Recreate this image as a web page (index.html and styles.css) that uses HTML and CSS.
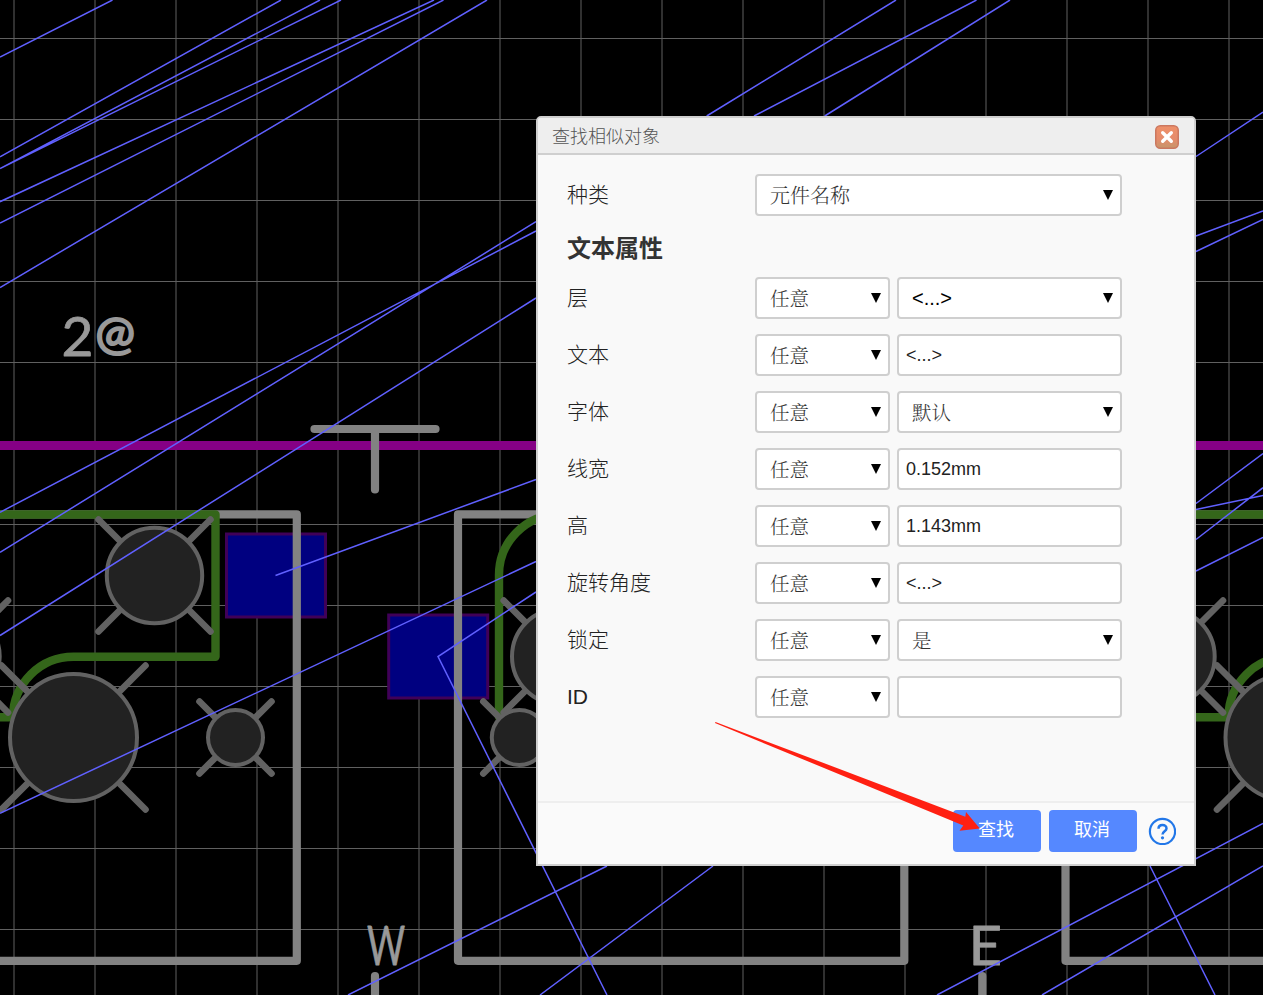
FILE: index.html
```html
<!DOCTYPE html>
<html lang="zh-CN">
<head>
<meta charset="utf-8">
<title>查找相似对象</title>
<link rel="stylesheet" href="styles.css">
</head>
<body>
<main class="workspace">
<svg class="board" viewBox="0 0 1263 995" width="1263" height="995">
  <defs>
    <g id="hole-m"><path class="spoke" d="M-56-56 56 56M56-56-56 56"/><circle class="hole" r="47.7"/></g>
    <g id="hole-l"><path class="spoke" d="M-72-72 72 72M72-72-72 72"/><circle class="hole" r="63.5"/></g>
    <g id="hole-s"><path class="spoke" d="M-36-36 36 36M36-36-36 36"/><circle class="hole" r="27.5"/></g>
  </defs>
  <path class="grid" d="M14 0V995M95 0V995M176 0V995M257 0V995M338 0V995M419 0V995M500 0V995M581 0V995M662 0V995M743 0V995M824 0V995M905 0V995M986 0V995M1067 0V995M1148 0V995M1229 0V995"/>
  <path class="grid" d="M0 38.5H1263M0 119.5H1263M0 200.5H1263M0 281.5H1263M0 362.5H1263M0 443.5H1263M0 524.5H1263M0 605.5H1263M0 686.5H1263M0 767.5H1263M0 848.5H1263M0 929.5H1263"/>
  <path class="outline-purple" d="M0 445.5H1263"/>
  <rect class="pad" x="226.5" y="534" width="99" height="83"/>
  <rect class="pad" x="388.7" y="615" width="99" height="83"/>
  <g class="silk">
    <path d="M-5 514.3H296.8V960.8H-5M458 514.3H904.3V960.8H458ZM1270 514.3H1065.5V960.8H1270"/>
    <path d="M314.5 429H435.5M375 429V489.5M375 976V1000M982.3 976V1000"/>
  </g>
  <g class="copper">
    <path d="M-5 514.5H215.5V656.7H73.5A60.5 60.5 0 0 0 13 717.2H-5"/>
    <path d="M499 717V575A60.5 60.5 0 0 1 559.5 514.5H1270M1190 717.2H1228.5A60.5 60.5 0 0 1 1289 656.7"/>
  </g>
  <use href="#hole-m" x="-48" y="656.5"/>
  <use href="#hole-m" x="154.5" y="575.5"/>
  <use href="#hole-l" x="73.5" y="737.5"/>
  <use href="#hole-s" x="235.5" y="737.5"/>
  <use href="#hole-m" x="559.7" y="656.5"/>
  <use href="#hole-s" x="519.3" y="737.5"/>
  <use href="#hole-m" x="1167" y="656.5"/>
  <use href="#hole-l" x="1289" y="737.5"/>
  <g class="designator">
    <text transform="translate(61.5 356) scale(1 .98)">2</text>
    <text class="at" transform="translate(95.5 349.3) scale(1.07 1.04)">@</text>
    <text transform="translate(367 964.5) scale(.67 .98)">W</text>
    <text transform="translate(968.5 964.5) scale(1.06 .98)">E</text>
  </g>
  <g class="ratline">
    <path d="M0 57 112.5 0M0 156.8 281 0M0 168.5 320 0M0 168.5 341 0M0 201.7 434 0M0 223 443.5 0M0 287.5 487 0"/>
    <path d="M0 512.3 536 231M0 552.3 536 221.7M0 635.5 536 298M275.5 575.5 536 479.5M0 813.3 536 561.5"/>
    <path d="M536 592 438 656.5 607 995M348 995 607 866M540 995 713 866"/>
    <path d="M706.7 116 896 0M754 116 976.5 0M824.7 116 1010 0M1196 156.5 1263 112M1196 236 1263 211M1196 251.5 1263 219.5"/>
    <path d="M1196 503.5 1263 453.5M1196 509.5 1263 495.5M1196 539.5 1263 487.7M1196 571 1263 537.3"/>
    <path d="M937 995 1263 823.5M1042 995 1263 866M1150 866 1215 995"/>
  </g>
</svg>

<section class="dialog">
  <header class="dialog-header">
    <span>查找相似对象</span>
    <svg class="close" viewBox="0 0 24 24" width="24" height="24">
      <defs><linearGradient id="close-fill" x2="0" y2="1"><stop offset="0" stop-color="#ee9069"/><stop offset=".6" stop-color="#e58b6b"/><stop offset="1" stop-color="#c5966b"/></linearGradient></defs>
      <rect x=".75" y=".75" width="22.5" height="22.5" rx="4.5" fill="url(#close-fill)" stroke="#cb7860" stroke-width="1.5"/>
      <path d="M7.7 7.7 16.3 16.3M16.3 7.7 7.7 16.3" stroke="#fff" stroke-width="3.4" stroke-linecap="round"/>
    </svg>
  </header>
  <div class="dialog-body">
    <div class="row"><label>种类</label><div class="select wide">元件名称<i></i></div></div>
    <h2>文本属性</h2>
    <div class="row"><label>层</label><div class="select">任意<i></i></div><div class="select value latin">&lt;...&gt;<i></i></div></div>
    <div class="row"><label>文本</label><div class="select">任意<i></i></div><div class="input">&lt;...&gt;</div></div>
    <div class="row"><label>字体</label><div class="select">任意<i></i></div><div class="select value">默认<i></i></div></div>
    <div class="row"><label>线宽</label><div class="select">任意<i></i></div><div class="input">0.152mm</div></div>
    <div class="row"><label>高</label><div class="select">任意<i></i></div><div class="input">1.143mm</div></div>
    <div class="row"><label>旋转角度</label><div class="select">任意<i></i></div><div class="input">&lt;...&gt;</div></div>
    <div class="row"><label>锁定</label><div class="select">任意<i></i></div><div class="select value">是<i></i></div></div>
    <div class="row"><label>ID</label><div class="select">任意<i></i></div><div class="input"></div></div>
  </div>
  <footer class="dialog-footer">
    <div class="button">查找</div>
    <div class="button">取消</div>
    <svg class="help" viewBox="0 0 28 28" width="28" height="28" fill="none" stroke="#2277e8" stroke-width="2.2">
      <circle cx="14.5" cy="14.5" r="12.6"/>
      <path d="M10.5 11.7C10.5 9.4 12.2 7.9 14.5 7.9S18.5 9.4 18.5 11.5C18.5 14.2 14.5 14.3 14.5 17.4" stroke-width="2.5"/>
      <circle cx="14.5" cy="20.8" r="1.6" fill="#2277e8" stroke="none"/>
    </svg>
  </footer>
</section>

<svg class="pointer" viewBox="0 0 266 110" width="266" height="110">
  <path fill="#ff2012" d="M.5 0 250.3 94.7 251 90 264.8 106.4 244.5 108.8 248.3 103.5 0 1Z"/>
</svg>
</main>
</body>
</html>
```
FILE: styles.css
```css
* { box-sizing: border-box; }
body { margin: 0; background: #000; font-family: "Liberation Sans", "Noto Sans CJK SC", sans-serif; }
.workspace { position: relative; width: 1263px; height: 995px; overflow: hidden; }
.board { display: block; }
.grid { stroke: #606060; stroke-width: 1; }
.outline-purple { stroke: #850085; stroke-width: 9; }
.pad { fill: #000080; stroke: #400058; stroke-width: 3; }
.silk { fill: none; stroke: #828282; stroke-width: 8.2; stroke-linecap: round; stroke-linejoin: round; }
.copper { fill: none; stroke: #34661a; stroke-width: 8.4; stroke-linecap: round; stroke-linejoin: round; }
.spoke { stroke: #626262; stroke-width: 6.6; stroke-linecap: round; }
.hole { fill: #222; stroke: #626262; stroke-width: 4; }
.designator { fill: #999; stroke: #999; stroke-width: .8; stroke-linejoin: round; font: 55px Lato, sans-serif; }
.at { font-size: 44px; stroke-width: 2; }
.ratline { fill: none; stroke: #6060ff; stroke-width: 1.5; }

.dialog {
  position: absolute; left: 536px; top: 116px; width: 660px; height: 750px;
  display: flex; flex-direction: column;
  border: 2px solid #cfcfcf; border-radius: 5px 5px 0 0; background: #f9f9f9;
}
.dialog-header {
  display: flex; justify-content: space-between; align-items: center;
  height: 37px; padding: 0 15px 0 14px;
  border-bottom: 2px solid #cfcfcf; border-radius: 3px 3px 0 0; background: #eee;
  color: #555; font-size: 18px; font-weight: 300; line-height: 35px;
}
.close { margin-top: 3px; }
.dialog-header span { font-family: "Noto Sans CJK SC", sans-serif; }
.dialog-body { flex: 1; padding: 19px 0 0 29px; }
.row { display: flex; align-items: center; gap: 7px; height: 42px; margin-bottom: 15px; }
.row label {
  width: 181px; color: #222; font-size: 21px; font-weight: 300; line-height: 42px;
}
h2 { height: 42px; margin: -5px 0 9px; color: #333; font: 700 24px/42px "Noto Sans CJK SC", sans-serif; }
.select, .input { height: 42px; border: 2px solid #cfcfcf; border-radius: 4px; background: #fff; line-height: 38px; }
.select {
  display: flex; justify-content: space-between; align-items: center;
  width: 135px; padding: 0 8px 0 13px;
  color: #333; font-family: "Noto Serif CJK SC", "Liberation Sans", "Noto Sans CJK SC", sans-serif; font-size: 19.5px; font-weight: 300;
}
.select i { width: 10px; height: 10px; margin-right: -1px; background: #000; clip-path: polygon(0 0, 100% 0, 50% 100%); }
.select.wide { width: 367px; font-size: 20px; line-height: 40px; }
.select.value { width: 225px; }
.select.latin { color: #000; font-family: "Liberation Sans", sans-serif; font-size: 20px; font-weight: 400; }
.input { width: 225px; padding-left: 7px; color: #222; font-size: 18px; }
.dialog-footer {
  display: flex; align-items: flex-start; gap: 8px; justify-content: flex-end;
  height: 63px; padding: 7px 17px 0; border-top: 2px solid #eee; background: #fafafa;
}
.button {
  width: 88px; height: 42px; padding-right: 2px; border-radius: 4px; background: #58f;
  color: #fff; font-size: 18px; line-height: 41px; text-align: center;
}
.help { margin: 7px 1px 0 3px; }
.pointer { position: absolute; left: 715px; top: 722px; }
```
